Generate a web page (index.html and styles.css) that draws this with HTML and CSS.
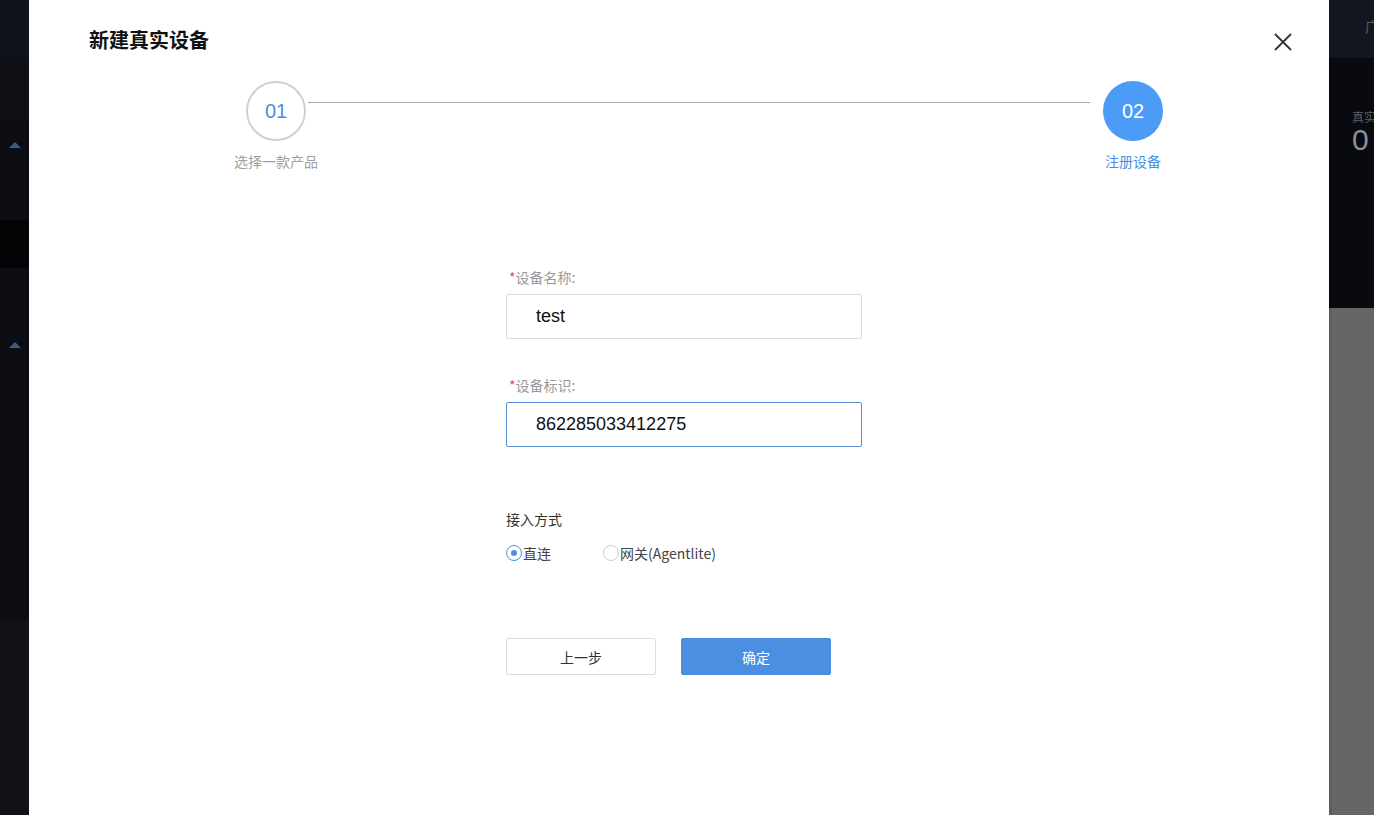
FILE: index.html
```html
<!DOCTYPE html>
<html lang="zh-CN">
<head>
  <meta charset="UTF-8">
  <meta name="viewport" content="width=device-width, initial-scale=1.0">
  <title>新建真实设备</title>
  <link rel="stylesheet" href="styles.css">
</head>
<body>
  <div class="page">
    <div class="side-left">
      <div class="band b1"></div>
      <div class="band b2"></div>
      <div class="band b3"><span class="tri"></span></div>
      <div class="band b4"></div>
      <div class="band b5"><span class="tri low"></span></div>
      <div class="band b6"></div>
    </div>

    <div class="modal">
      <div class="modal-head">
        <h2>新建真实设备</h2>
        <button class="close" aria-label="close">
          <svg width="18" height="18" viewBox="0 0 18 18"><path d="M1 1L17 17M17 1L1 17" stroke="#333" stroke-width="1.8" fill="none"/></svg>
        </button>
      </div>

      <div class="steps">
        <div class="step">
          <div class="circle">01</div>
          <div class="step-label">选择一款产品</div>
        </div>
        <div class="step-line"></div>
        <div class="step active">
          <div class="circle">02</div>
          <div class="step-label">注册设备</div>
        </div>
      </div>

      <div class="form">
        <div class="form-field">
          <label><span class="req">*</span>设备名称:</label>
          <input type="text" value="test">
        </div>
        <div class="form-field">
          <label><span class="req">*</span>设备标识:</label>
          <input type="text" class="focus" value="862285033412275">
        </div>

        <div class="access">
          <div class="access-title">接入方式</div>
          <div class="radios">
            <label class="radio"><span class="dot checked"></span>直连</label>
            <label class="radio"><span class="dot"></span>网关(Agentlite)</label>
          </div>
        </div>

        <div class="actions">
          <button class="btn">上一步</button>
          <button class="btn primary">确定</button>
        </div>
      </div>
    </div>

    <div class="side-right">
      <div class="r-top"><span>广</span></div>
      <div class="r-mid">
        <div class="r-label">真实</div>
        <div class="r-num">0</div>
      </div>
      <div class="r-bottom"></div>
    </div>
  </div>
</body>
</html>
```

FILE: styles.css
```css
body {
  margin: 0;
  font-family: "Liberation Sans", "Noto Sans CJK SC", sans-serif;
  overflow: hidden;
}

.page {
  display: flex;
  height: 815px;
}

/* dark app behind the dialog */
.side-left {
  width: 29px;
  display: flex;
  flex-direction: column;
}

.band {
  display: flex;
  justify-content: center;
}

.b1 { height: 58px; background-color: #0f121b; }
.b2 { height: 62px; background-color: #0e1016; }
.b3 { height: 100px; background-color: #0b0d12; }
.b4 { height: 48px; background-color: #030405; }
.b5 { height: 352px; background-color: #0b0d12; }
.b6 { flex: 1; background-color: #101216; }

.tri {
  margin-top: 22px;
  width: 0;
  height: 0;
  border-left: 6px solid transparent;
  border-right: 6px solid transparent;
  border-bottom: 6px solid #3a5b86;
}

.tri.low {
  margin-top: 74px;
}

.side-right {
  width: 45px;
  display: flex;
  flex-direction: column;
  overflow: hidden;
}

.r-top {
  height: 58px;
  background-color: #13161e;
  color: #555a63;
  font-size: 14px;
  padding-left: 36px;
  box-sizing: border-box;
  padding-top: 16px;
  overflow: hidden;
  white-space: nowrap;
}

.r-mid {
  height: 250px;
  background-color: #080a0f;
  padding-left: 23px;
  padding-top: 50px;
  box-sizing: border-box;
  color: #5b6068;
}

.r-label {
  font-size: 12px;
  white-space: nowrap;
}

.r-num {
  font-size: 30px;
  line-height: 30px;
  color: #8a8f96;
}

.r-bottom {
  flex: 1;
  background-color: #666;
  border-left: 3px solid #5e5e5e;
}

/* dialog */
.modal {
  width: 1300px;
  background-color: #fff;
  font-family: "Noto Sans CJK SC", "Liberation Sans", sans-serif;
}

.modal-head {
  display: flex;
  justify-content: space-between;
  align-items: center;
  padding: 26px 36px 0 60px;
}

.modal-head h2 {
  margin: 0;
  font-size: 20px;
  font-weight: bold;
  color: #111;
  line-height: 28px;
}

.close {
  border: none;
  background: none;
  padding: 0;
  margin-top: 6px;
  margin-right: 1px;
  cursor: pointer;
}

.steps {
  display: flex;
  align-items: flex-start;
  padding: 27px 0 0 197px;
}

.step {
  width: 100px;
  display: flex;
  flex-direction: column;
  align-items: center;
}

.circle {
  width: 60px;
  height: 60px;
  box-sizing: border-box;
  border: 2px solid #d0d0d0;
  border-radius: 50%;
  display: flex;
  align-items: center;
  justify-content: center;
  font-family: "Liberation Sans", sans-serif;
  font-size: 20px;
  color: #4a8fdc;
}

.step-label {
  margin-top: 10px;
  font-size: 14px;
  color: #a0a0a0;
  white-space: nowrap;
}

.step-line {
  width: 782px;
  height: 1px;
  background-color: #a8a8a8;
  margin: 21px -7px 0 -18px;
}

.step.active .circle {
  border: none;
  background-color: #4c9bf6;
  color: #fff;
}

.step.active .step-label {
  color: #4a8fdc;
}

.form {
  width: 356px;
  margin: 96px 0 0 477px;
}

.form-field {
  margin-bottom: 36px;
}

.form-field label {
  display: block;
  font-size: 14px;
  color: #999;
  line-height: 20px;
  margin-bottom: 7px;
  padding-left: 3px;
}

.req {
  color: #d9534f;
}

.form-field input {
  width: 100%;
  height: 45px;
  box-sizing: border-box;
  border: 1px solid #dcdcdc;
  border-radius: 2px;
  padding: 0 29px;
  font-family: "Liberation Sans", sans-serif;
  font-size: 18px;
  color: #111;
  outline: none;
}

.form-field input.focus {
  border-color: #5b8fd6;
}

.access {
  margin-top: 62px;
}

.access-title {
  font-size: 14px;
  color: #333;
  line-height: 20px;
}

.radios {
  display: flex;
  margin-top: 14px;
}

.radio {
  display: flex;
  align-items: center;
  font-size: 14px;
  color: #444;
  line-height: 20px;
  margin-right: 52px;
}

.dot {
  width: 16px;
  height: 16px;
  box-sizing: border-box;
  border: 1px solid #ccc;
  border-radius: 50%;
  margin-right: 1px;
  position: relative;
}

.dot.checked {
  border-color: #4a8fdc;
}

.dot.checked::after {
  content: "";
  position: absolute;
  left: 4px;
  top: 4px;
  width: 6px;
  height: 6px;
  border-radius: 50%;
  background-color: #4a8fdc;
}

.actions {
  display: flex;
  gap: 25px;
  margin-top: 75px;
}

.btn {
  width: 150px;
  height: 37px;
  border: 1px solid #dcdcdc;
  border-radius: 2px;
  background-color: #fff;
  font-family: "Noto Sans CJK SC", sans-serif;
  font-size: 14px;
  color: #333;
  cursor: pointer;
}

.btn.primary {
  background-color: #4a8fe2;
  border-color: #4a8fe2;
  color: #fff;
}
```
